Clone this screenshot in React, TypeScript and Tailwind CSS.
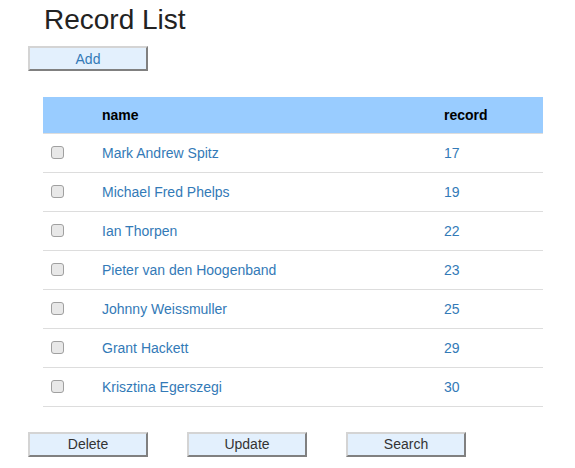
import React from 'react';

type Swimmer = {
  id: number;
  name: string;
  record: number;
};

const swimmers: Swimmer[] = [
  { id: 1, name: 'Mark Andrew Spitz', record: 17 },
  { id: 2, name: 'Michael Fred Phelps', record: 19 },
  { id: 3, name: 'Ian Thorpen', record: 22 },
  { id: 4, name: 'Pieter van den Hoogenband', record: 23 },
  { id: 5, name: 'Johnny Weissmuller', record: 25 },
  { id: 6, name: 'Grant Hackett', record: 29 },
  { id: 7, name: 'Krisztina Egerszegi', record: 30 },
];

// old-school raised button look
const ActionButton: React.FC<{ label: string; className?: string }> = ({ label, className }) => (
  <button
    className={
      'w-[120px] h-[25px] bg-[#e3f0fd] text-[14px] leading-none border-2 border-t-[#d4d4d4] border-l-[#d4d4d4] border-b-[#808080] border-r-[#808080] ' +
      (className || '')
    }
  >
    {label}
  </button>
);

const App: React.FC = () => {
  return (
    <div className="w-[575px] h-[468px] bg-white pl-[28px] font-['Liberation_Sans',Arial,sans-serif] text-[14px] text-[#333]">
      <h1 className="ml-[16px] pt-[4px] text-[28px] leading-[32px] text-[#222]">Record List</h1>

      <div className="mt-[10px]">
        <ActionButton label="Add" className="text-[#337ab7]" />
      </div>

      <table className="ml-[15px] mt-[26px] w-[500px] border-collapse table-fixed">
        <thead>
          <tr className="bg-[#99ccff] h-[36px]">
            <th className="w-[51px]"></th>
            <th className="w-[342px] text-left font-bold text-black px-[8px] pt-[2px]">name</th>
            <th className="text-left font-bold text-black px-[8px] pt-[2px]">record</th>
          </tr>
        </thead>
        <tbody>
          {swimmers.map((s) => (
            <tr key={s.id} className="h-[39px] border-t border-[#dddddd]">
              <td className="pl-[8px] align-middle">
                <input
                  type="checkbox"
                  className="block appearance-none w-[13px] h-[13px] border border-[#a0a0a0] rounded-[3px] bg-[#e8e8e8]"
                />
              </td>
              <td className="px-[8px] pt-[2px] text-[#337ab7]">{s.name}</td>
              <td className="px-[8px] pt-[2px] text-[#337ab7]">{s.record}</td>
            </tr>
          ))}
          <tr className="border-t border-[#dddddd]">
            <td colSpan={3}></td>
          </tr>
        </tbody>
      </table>

      <div className="flex gap-[39px] mt-[25px]">
        <ActionButton label="Delete" />
        <ActionButton label="Update" />
        <ActionButton label="Search" />
      </div>
    </div>
  );
};

export default App;
